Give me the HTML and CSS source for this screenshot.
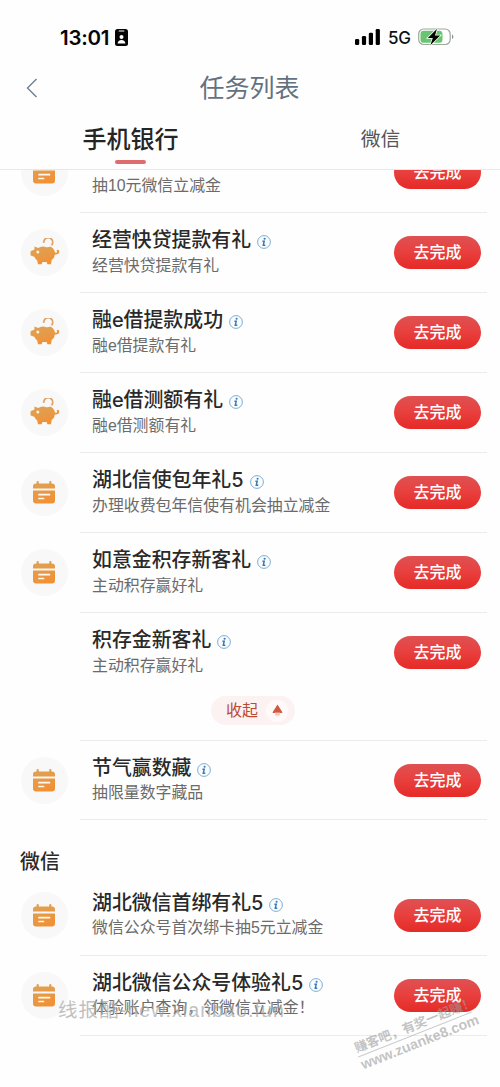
FILE: index.html
```html
<!DOCTYPE html>
<html lang="zh-CN">
<head>
<meta charset="utf-8">
<title>任务列表</title>
<link rel="stylesheet" href="styles.css">
</head>
<body>
<svg width="0" height="0" class="defs" aria-hidden="true">
  <defs>
    <linearGradient id="orange" x1="0" y1="0" x2="0.4" y2="1"><stop offset="0" stop-color="#dba459"/><stop offset="1" stop-color="#f19137"/></linearGradient>
    <symbol id="calendar" viewBox="0 0 22 23">
      <path fill="url(#orange)" d="M0 7.500V5.500Q0 2.400 3 2.400H3.600V1Q3.600 0 4.700 0T5.800 1V2.400H16.200V1Q16.200 0 17.300 0T18.400 1V2.400H19Q22 2.400 22 5.500V7.500ZM0 9.600H22V19.500Q22 22.500 19 22.500H3Q0 22.500 0 19.500Z"/>
      <path stroke="#fffaf0" stroke-width="1.700" stroke-linecap="round" d="M6 13.700H16.500M6 17.500H10.500"/>
    </symbol>
    <symbol id="pig" viewBox="0 0 30 27">
      <path fill="none" stroke="#dfa36a" stroke-width="1.700" d="M13.800 4.800A4.500 4.500 0 1 1 21.500 7.300"/>
      <path fill="url(#orange)" d="M4.300 8.500 8.300 10Q11.500 7.600 15 8.800Q17.500 10 20.500 8.500Q24.300 10.500 25 14.500Q26.800 15 27.200 13.800Q26 12 27.600 11.800T29.300 13.800Q28.800 17 25 16.500Q24.500 19.800 21.700 22L21 26.200H17.500L16.500 24H12.500L11.500 26.200H8L7.200 22.500Q5.200 21 4.300 18.800L1.300 17.800Q.5 17.500.5 16.500V14Q.5 13 1.500 12.700L4.200 11.700Q4.700 10 4.300 8.500Z"/>
      <circle cx="7.800" cy="14" r="1.500" fill="#fff3df"/>
    </symbol>
    <symbol id="info" viewBox="0 0 14 14">
      <circle cx="7" cy="7" r="6.400" fill="#f9fdff" stroke="#70a5cd" stroke-width=".9"/>
      <circle cx="7.600" cy="3.700" r="1.050" fill="#3b78b5"/>
      <path fill="none" stroke="#3b78b5" stroke-width="1.500" d="M5.400 6.200H7.200L6.300 10.200H8.300"/>
    </symbol>
  </defs>
</svg>
<main class="screen">
  <header class="header">
    <div class="status">
      <div class="status-left"><span class="time">13:01</span>
        <svg class="badge" viewBox="0 0 13 17"><rect width="13" height="17" rx="2.500" fill="#050505"/><path d="M4.200 2H8.800" stroke="#fff" stroke-width="1.200" stroke-linecap="round"/><circle cx="6.500" cy="8" r="2" fill="#fff"/><path d="M2.600 14.500Q3 11 6.500 11T10.400 14.500Z" fill="#fff"/></svg>
      </div>
      <div class="status-right">
        <svg class="signal" viewBox="0 0 25 16"><rect y="10" width="4.200" height="6" rx="1.300"/><rect x="6.900" y="7" width="4.200" height="9" rx="1.300"/><rect x="13.800" y="3.700" width="4.200" height="12.300" rx="1.300"/><rect x="20.700" width="4.200" height="16" rx="1.300"/></svg>
        <span class="network">5G</span>
        <svg class="battery" viewBox="0 0 36 18"><rect x=".7" y="1" width="31.500" height="15.500" rx="5" fill="#fff" stroke="#9da69d" stroke-width="1.200"/><rect x="2.500" y="2.800" width="22" height="12" rx="3.400" fill="#69c56f"/><path d="M34 6.500Q35.400 7 35.400 8.700T34 11Z" fill="#8d938d"/><path d="M19 .8 9.800 10H14.800L12.300 17.200 22.200 7.500H17Z" fill="#050505" stroke="#fff" stroke-width="1.500" paint-order="stroke"/></svg>
      </div>
    </div>
    <nav class="navbar">
      <svg class="back" viewBox="0 0 12 20"><path d="M10.500 1 1.500 10 10.500 19" fill="none" stroke="#72808c" stroke-width="1.400"/></svg>
      <h1 class="page-title">任务列表</h1>
    </nav>
    <div class="tabs">
      <div class="tab tab-active">手机银行</div>
      <div class="tab">微信</div>
    </div>
  </header>
  <div class="viewport">
    <div class="list">
      <section class="row"><div class="icon"><svg class="cal"><use href="#calendar"/></svg></div><div class="body"><div class="copy copy-first"><p class="desc">抽10元微信立减金</p></div><button class="go">去完成</button></div></section>
      <section class="row"><div class="icon"><svg class="pig"><use href="#pig"/></svg></div><div class="body"><div class="copy"><h2 class="name">经营快贷提款有礼<svg class="info"><use href="#info"/></svg></h2><p class="desc">经营快贷提款有礼</p></div><button class="go">去完成</button></div></section>
      <section class="row"><div class="icon"><svg class="pig"><use href="#pig"/></svg></div><div class="body"><div class="copy"><h2 class="name">融e借提款成功<svg class="info"><use href="#info"/></svg></h2><p class="desc">融e借提款有礼</p></div><button class="go">去完成</button></div></section>
      <section class="row"><div class="icon"><svg class="pig"><use href="#pig"/></svg></div><div class="body"><div class="copy"><h2 class="name">融e借测额有礼<svg class="info"><use href="#info"/></svg></h2><p class="desc">融e借测额有礼</p></div><button class="go">去完成</button></div></section>
      <section class="row"><div class="icon"><svg class="cal"><use href="#calendar"/></svg></div><div class="body"><div class="copy"><h2 class="name">湖北信使包年礼5<svg class="info"><use href="#info"/></svg></h2><p class="desc">办理收费包年信使有机会抽立减金</p></div><button class="go">去完成</button></div></section>
      <section class="row"><div class="icon"><svg class="cal"><use href="#calendar"/></svg></div><div class="body"><div class="copy"><h2 class="name">如意金积存新客礼<svg class="info"><use href="#info"/></svg></h2><p class="desc">主动积存赢好礼</p></div><button class="go">去完成</button></div></section>
      <section class="row row-open"><div class="icon icon-empty"></div><div class="body"><div class="copy"><h2 class="name">积存金新客礼<svg class="info"><use href="#info"/></svg></h2><p class="desc">主动积存赢好礼</p></div><button class="go">去完成</button></div></section>
      <div class="fold"><button class="fold-button">收起<span class="fold-arrow"><svg viewBox="0 0 12 14"><path d="M6 0 11.500 8.500Q10 9.500 8.200 9H3.800Q2 9.500.5 8.500Z" fill="#cf5a42"/><path d="M3.500 9H8.500V12H3.500Z" fill="#f6c5b8"/></svg></span></button></div>
      <section class="row row-short"><div class="icon"><svg class="cal"><use href="#calendar"/></svg></div><div class="body"><div class="copy copy-tight"><h2 class="name">节气赢数藏<svg class="info"><use href="#info"/></svg></h2><p class="desc">抽限量数字藏品</p></div><button class="go">去完成</button></div></section>
      <h2 class="group">微信</h2>
      <section class="row"><div class="icon"><svg class="cal"><use href="#calendar"/></svg></div><div class="body"><div class="copy copy-tight"><h2 class="name">湖北微信首绑有礼5<svg class="info"><use href="#info"/></svg></h2><p class="desc">微信公众号首次绑卡抽5元立减金</p></div><button class="go">去完成</button></div></section>
      <section class="row"><div class="icon"><svg class="cal"><use href="#calendar"/></svg></div><div class="body"><div class="copy copy-tight"><h2 class="name">湖北微信公众号体验礼5<svg class="info"><use href="#info"/></svg></h2><p class="desc">体验账户查询，领微信立减金！</p></div><button class="go">去完成</button></div></section>
    </div>
  </div>
  <div class="mark-left">线报酷-new.xianbao.fun</div>
  <div class="mark-right"><div class="mark-slogan">赚客吧，有奖一起赚！</div><div class="mark-site">www.zuanke8.com</div></div>
</main>
</body>
</html>
```
FILE: styles.css
```css
* { box-sizing: border-box; }
body { margin: 0; background: #fefefe; font-family: "Liberation Sans", "Noto Sans CJK SC", sans-serif; }
h1, h2, p { margin: 0; font-weight: 400; }
button { border: 0; padding: 0; font-family: inherit; }
svg { display: block; }
.defs { position: absolute; }
.screen { position: relative; width: 500px; height: 1087px; overflow: hidden; display: flex; flex-direction: column; }
.header { height: 170px; flex: none; border-bottom: 1px solid #e8e8e8; }
.status { height: 58px; padding: 17px 46px 0 60px; display: flex; justify-content: space-between; }
.status-left, .status-right { display: flex; align-items: center; height: 40px; }
.time { font: 600 20.500px/40px Inter, sans-serif; letter-spacing: -.25px; color: #050505; width: 55px; padding-top: 1px; white-space: nowrap; }
.badge { width: 13px; height: 17px; }
.signal { width: 25px; height: 16px; margin-right: 8px; }
.network { font: 500 17px/40px Inter, sans-serif; letter-spacing: -.3px; width: 30px; color: #111; padding-top: 1px; }
.battery { width: 36px; height: 18px; }
.navbar { height: 60px; display: grid; grid-template-columns: 60px 1fr 60px; align-items: center; }
.back { width: 12px; height: 20px; margin-left: 26px; }
.page-title { text-align: center; font-size: 25px; line-height: 60px; color: #64717f; padding-right: 1px; }
.tabs { height: 51px; display: grid; grid-template-columns: 261px 1fr; }
.tab { display: flex; flex-direction: column; align-items: center; font-size: 19.800px; line-height: 42px; color: #555; }
.tab-active { font-size: 24px; font-weight: 500; line-height: 43px; color: #252525; }
.tab-active::after { content: ""; width: 31px; height: 4px; margin-top: -1px; border-radius: 2px; background: #df6d70; }
.viewport { flex: 1; min-height: 0; overflow: hidden; }
.list { margin-top: -37px; }
.row { display: flex; height: 80px; padding: 0 13px 0 21px; }
.row-short { height: 79px; }
.icon { width: 47px; height: 47px; margin: 16px 12px 0 0; flex: none; border-radius: 50%; background: #f8f8f8; display: flex; align-items: center; justify-content: center; }
.icon-empty { background: transparent; }
.cal { width: 22px; height: 23px; margin-right: 2px; }
.pig { width: 30px; height: 27px; margin-bottom: 3px; }
.body { flex: 1; display: flex; justify-content: space-between; padding: 0 6px 0 12px; border-bottom: 1px solid #ececec; }
.row-open .body { border-bottom-color: transparent; }
.copy { padding-top: 13px; }
.copy-first { padding-top: 41px; }
.copy-tight .desc { line-height: 22px; }
.name { display: flex; align-items: center; height: 28px; font-family: Inter, "Noto Sans CJK SC", sans-serif; font-size: 19.900px; line-height: 28px; font-weight: 500; color: #292929; white-space: nowrap; }
.info { width: 14px; height: 14px; margin: 4px 0 0 6px; }
.desc { height: 24px; font-size: 15.900px; line-height: 24px; color: #6b6b6b; white-space: nowrap; }
.go { width: 87px; height: 33px; margin-top: 23px; border-radius: 17px; background: linear-gradient(#df5153, #e8413f 45%, #e52b27); color: #fff; font-size: 16px; line-height: 33px; font-weight: 500; text-align: center; }
.fold { height: 48px; margin: 0 13px 0 80px; padding: 3px 0 0 131px; border-bottom: 1px solid #ececec; }
.fold-button { width: 84px; height: 29px; padding: 1px 0 0 15px; border-radius: 15px; background: #fcf2f2; display: flex; align-items: center; gap: 8px; font-size: 16px; line-height: 28px; color: #b94b35; white-space: nowrap; }
.fold-arrow { width: 22px; height: 22px; border-radius: 50%; background: #fffafa; display: flex; justify-content: center; align-items: center; flex: none; }
.fold-arrow svg { width: 11px; height: 14px; }
.group { height: 56px; padding: 28px 0 0 20px; font-size: 19.900px; line-height: 28px; font-weight: 500; color: #292929; }
.mark-left { position: absolute; left: 58px; top: 997px; font-size: 19.500px; line-height: 27px; letter-spacing: 1.100px; white-space: nowrap; color: rgba(165,165,165,.7); }
.mark-right { position: absolute; left: 354px; top: 1017px; width: 122px; transform: rotate(-21.600deg); font-weight: 700; color: rgba(155,155,155,.6); white-space: nowrap; }
.mark-slogan { font-size: 12.800px; line-height: 17px; border-bottom: 1px solid rgba(155,155,155,.5); }
.mark-site { font-size: 14.200px; line-height: 17px; }
```
